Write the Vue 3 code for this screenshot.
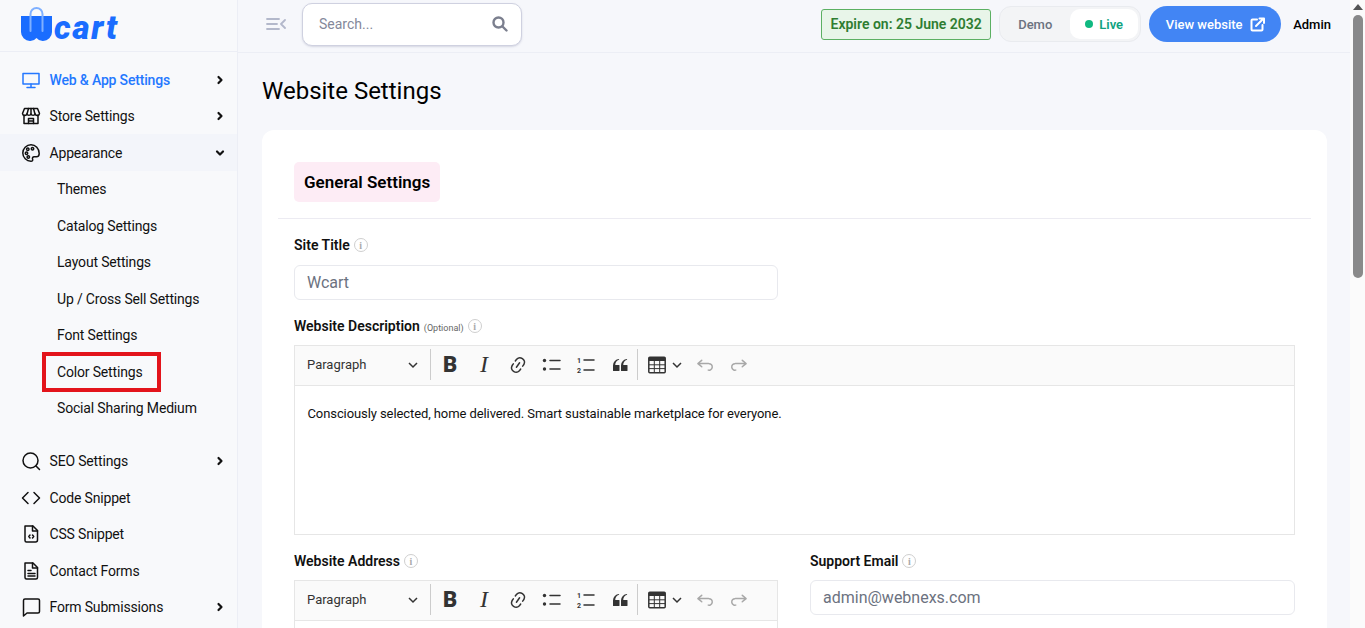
<template>
  <div class="page">
    <aside class="sidebar">
      <div class="logo">
        <svg width="32" height="35" viewBox="0 0 32 35">
          <path d="M0 9h31v16a9 9 0 0 1-9 9 8 8 0 0 1-6.500-3 8 8 0 0 1-6.500 3 9 9 0 0 1-9-9z" fill="#1a6dff" />
          <path d="M9.500 24V7a6 6 0 0 1 12 0v17" fill="none" stroke="#7fb0ff" stroke-width="2" stroke-linecap="round" />
        </svg>
        <span class="logo-text">cart</span>
      </div>
      <nav class="menu">
        <template v-for="item in menu" :key="item.label">
          <div class="menu-row" :class="{ active: item.active, open: item.open, spaced: item.spaced }">
            <svg class="menu-icon" width="20" height="20" viewBox="0 0 20 20" fill="none" stroke="currentColor" stroke-width="1.5" stroke-linecap="round" stroke-linejoin="round">
              <path v-for="d in item.paths" :key="d" :d="d" />
            </svg>
            <span class="menu-label">{{ item.label }}</span>
            <svg v-if="item.arrow" class="chevron" width="10" height="10" viewBox="0 0 10 10" fill="none" stroke="#111" stroke-width="2.2" stroke-linecap="round" stroke-linejoin="round">
              <path :d="item.open ? 'M2 3.500 5 6.500 8 3.500' : 'M3.500 2 6.500 5 3.500 8'" />
            </svg>
          </div>
          <template v-if="item.open">
            <div v-for="sub in subMenu" :key="sub" class="sub-row">
              <span>{{ sub }}</span>
              <i v-if="sub === 'Color Settings'" class="red-box"></i>
            </div>
          </template>
        </template>
      </nav>
    </aside>

    <div class="main">
      <header class="topbar">
        <svg class="toggle" width="20" height="14" viewBox="0 0 20 14" fill="none" stroke="#b3b8cb" stroke-width="1.8" stroke-linecap="round" stroke-linejoin="round">
          <path d="M1 2h12M1 7h10M1 12h12M19 3l-4 4 4 4" />
        </svg>
        <div class="search">
          <span>Search...</span>
          <svg width="16" height="16" viewBox="0 0 16 16" fill="none" stroke="#7b7f8e" stroke-width="2.4" stroke-linecap="round">
            <circle cx="6.500" cy="6.500" r="5" />
            <path d="m10.500 10.500 4 4" />
          </svg>
        </div>
        <div class="expire">Expire on: 25 June 2032</div>
        <div class="mode">
          <span class="demo">Demo</span>
          <span class="live"><i></i>Live</span>
        </div>
        <button class="view-btn">
          View website
          <svg width="15" height="15" viewBox="0 0 15 15" fill="none" stroke="#fff" stroke-width="2" stroke-linecap="round" stroke-linejoin="round">
            <path d="M7 2.500H2.500a1 1 0 0 0-1 1v9a1 1 0 0 0 1 1h9a1 1 0 0 0 1-1V8M6 9l7.500-7.500M9.500 1.500h4.500v4.500" />
          </svg>
        </button>
        <span class="admin">Admin</span>
      </header>

      <main class="content">
        <h1>Website Settings</h1>
        <section class="card">
          <div class="tag"><span>General Settings</span></div>
          <div class="divider"></div>

          <label class="field-label">Site Title <i class="info">i</i></label>
          <div class="input half">Wcart</div>

          <label class="field-label">Website Description <small>(Optional)</small> <i class="info">i</i></label>
          <div class="editor">
            <div class="toolbar">
              <span class="para">Paragraph</span>
              <svg class="para-arrow" width="10" height="10" viewBox="0 0 10 10" fill="none" stroke="#333" stroke-width="1.5"><path d="m1 3 4 4 4-4" /></svg>
              <i class="sep"></i>
              <span class="tool bold">B</span>
              <span class="tool ital">I</span>
              <span v-for="t in tools" :key="t.name" class="tool">
                <svg width="20" height="20" viewBox="0 0 20 20" v-html="t.svg"></svg>
              </span>
              <i class="sep"></i>
              <span class="tool table">
                <svg width="20" height="20" viewBox="0 0 20 20" v-html="tableSvg"></svg>
                <svg width="10" height="10" viewBox="0 0 10 10" fill="none" stroke="#333" stroke-width="1.5"><path d="m1 3 4 4 4-4" /></svg>
              </span>
              <span v-for="t in history" :key="t.name" class="tool">
                <svg width="20" height="20" viewBox="0 0 20 20" v-html="t.svg"></svg>
              </span>
            </div>
            <div class="editor-body">
              <p>Consciously selected, home delivered. Smart sustainable marketplace for everyone.</p>
            </div>
          </div>

          <div class="two-col">
            <div>
              <label class="field-label">Website Address <i class="info">i</i></label>
              <div class="editor">
                <div class="toolbar">
                  <span class="para">Paragraph</span>
                  <svg class="para-arrow" width="10" height="10" viewBox="0 0 10 10" fill="none" stroke="#333" stroke-width="1.5"><path d="m1 3 4 4 4-4" /></svg>
                  <i class="sep"></i>
                  <span class="tool bold">B</span>
                  <span class="tool ital">I</span>
                  <span v-for="t in tools" :key="t.name" class="tool">
                    <svg width="20" height="20" viewBox="0 0 20 20" v-html="t.svg"></svg>
                  </span>
                  <i class="sep"></i>
                  <span class="tool table">
                    <svg width="20" height="20" viewBox="0 0 20 20" v-html="tableSvg"></svg>
                    <svg width="10" height="10" viewBox="0 0 10 10" fill="none" stroke="#333" stroke-width="1.5"><path d="m1 3 4 4 4-4" /></svg>
                  </span>
                  <span v-for="t in history" :key="t.name" class="tool">
                    <svg width="20" height="20" viewBox="0 0 20 20" v-html="t.svg"></svg>
                  </span>
                </div>
                <div class="editor-body short"></div>
              </div>
            </div>
            <div>
              <label class="field-label">Support Email <i class="info">i</i></label>
              <div class="input email">admin@webnexs.com</div>
            </div>
          </div>
        </section>
      </main>
    </div>

    <div class="scrollbar">
      <i class="arrow"></i>
      <i class="thumb"></i>
    </div>
  </div>
</template>

<script setup>
const menu = [
  { label: 'Web & App Settings', active: true, arrow: true, paths: ['M2 3.500h16v10.500H2z', 'M10 14v3.500M6 17.500h8'] },
  { label: 'Store Settings', arrow: true, paths: ['M3 9v8.500h14V9', 'M3.500 2.500h13L18.500 7.500a2.200 2.200 0 0 1-4.300.5 2.300 2.300 0 0 1-4.200 0 2.300 2.300 0 0 1-4.200 0 2.200 2.200 0 0 1-4.300-.5z', 'M7.500 2.500 6 8M12.500 2.500 14 8M10 2.500V8', 'M7.500 17.500v-5h5v5M7.500 15h5'] },
  { label: 'Appearance', arrow: true, open: true, paths: ['M10 1.800a8.200 8.200 0 0 0 0 16.400c1.500 0 2-1 1.600-2-.5-1.300 0-2.400 1.500-2.400h2.400c1.800 0 2.700-1.200 2.700-3.300C18.200 5.500 14.500 1.800 10 1.800z', 'M5.500 9a1.200 1.200 0 1 0 .01 0z', 'M6.800 5a1.200 1.200 0 1 0 .01 0z', 'M11.500 4.500a1.200 1.200 0 1 0 .01 0z', 'M7.300 12.800a1.200 1.200 0 1 0 .01 0z'] },
  { label: 'SEO Settings', arrow: true, spaced: true, paths: ['M9.500 2a7.500 7.500 0 1 0 0 15 7.500 7.500 0 0 0 0-15z', 'm15 15 3.500 3.500'] },
  { label: 'Code Snippet', paths: ['M7 4.500 1.500 10 7 15.500', 'M13 4.500l5.500 5.500-5.500 5.500'] },
  { label: 'CSS Snippet', paths: ['M4 2h8l4.500 4.500V16a2 2 0 0 1-2 2H5.500A1.500 1.500 0 0 1 4 16.500z', 'M11.500 2v5h5', 'M9 11 7.800 12.500 9 14M11.500 11l1.200 1.500-1.200 1.500'] },
  { label: 'Contact Forms', paths: ['M4 2h8l4.500 4.500V16.500a1.500 1.500 0 0 1-1.500 1.500H5.500A1.500 1.500 0 0 1 4 16.500z', 'M11.500 2v5h5', 'M7 9.500h3M7 12.500h7M7 15h7'] },
  { label: 'Form Submissions', arrow: true, paths: ['M2.500 3.500A1.500 1.500 0 0 1 4 2h13a1.500 1.500 0 0 1 1.500 1.500v11a1.500 1.500 0 0 1-1.500 1.500H6l-3.500 3z'] },
]

const subMenu = ['Themes', 'Catalog Settings', 'Layout Settings', 'Up / Cross Sell Settings', 'Font Settings', 'Color Settings', 'Social Sharing Medium']

const stroke = 'fill="none" stroke="#333" stroke-width="1.500" stroke-linecap="round" stroke-linejoin="round"'

const tools = [
  { name: 'link', svg: `<path fill="#333" d="m11.077 15 .991-1.416a.75.75 0 1 1 1.229.86l-1.148 1.64a.748.748 0 0 1-.217.206 5.251 5.251 0 0 1-8.503-5.955.741.741 0 0 1 .12-.274l1.147-1.639a.75.75 0 1 1 1.228.86L4.933 10.700l.006.003a3.750 3.750 0 0 0 6.132 4.294l.006.004zm5.494-5.335a.748.748 0 0 1-.12.274l-1.147 1.639a.75.75 0 1 1-1.228-.86l.86-1.230a3.750 3.750 0 0 0-6.144-4.301l-.86 1.229a.75.75 0 0 1-1.229-.86l1.148-1.640a.748.748 0 0 1 .217-.206 5.251 5.251 0 0 1 8.503 5.955zm-4.563-2.532a.75.75 0 0 1 .184 1.045l-3.155 4.505a.75.75 0 1 1-1.229-.86l3.155-4.506a.75.75 0 0 1 1.045-.184z"/>` },
  { name: 'bullets', svg: `<circle cx="2.500" cy="5.500" r="1.700" fill="#333"/><circle cx="2.500" cy="14" r="1.700" fill="#333"/><path d="M8 5.500h10M8 14h10" ${stroke}/>` },
  { name: 'numbers', svg: `<text x="1" y="7.500" font-family="Roboto" font-weight="700" font-size="7" fill="#333">1</text><text x="1" y="18" font-family="Roboto" font-weight="700" font-size="7" fill="#333">2</text><path d="M8 5h10M8 15h10" ${stroke}/>` },
  { name: 'quote', svg: `<path fill="#333" d="M3 10.423a6.500 6.500 0 0 1 6.056-6.408l.038.670C6.448 5.423 5.354 7.663 5.220 10H9c.552 0 .5.432.5.986v4.511c0 .554-.448.503-1 .503h-5c-.552 0-.5-.449-.5-1.003v-4.574zm8 0a6.500 6.500 0 0 1 6.056-6.408l.038.670c-2.646.739-3.740 2.979-3.873 5.315H17c.552 0 .5.432.5.986v4.511c0 .554-.448.503-1 .503h-5c-.552 0-.5-.449-.5-1.003v-4.574z"/>` },
]

const tableSvg = `<rect x="1.800" y="2.300" width="16.400" height="15.400" rx="1" fill="none" stroke="#333" stroke-width="1.500"/><rect x="1.800" y="2.300" width="16.400" height="3.700" fill="#333"/><path d="M7.300 6v11M12.700 6v11M2 9.800h16M2 13.600h16" stroke="#333" stroke-width="1"/>`

const history = [
  { name: 'undo', svg: `<path fill="#a8a8a8" d="m5.042 9.367 2.189 1.837a.75.75 0 0 1-.965 1.149l-3.788-3.180a.747.747 0 0 1-.21-.284.75.75 0 0 1 .17-.945L6.230 4.762a.75.75 0 1 1 .964 1.150L4.863 7.866h8.917A.75.75 0 0 1 14 7.900a4 4 0 1 1-1.477 7.718l.344-1.489a2.500 2.500 0 1 0 1.094-4.730l.008-.032H5.042z"/>` },
  { name: 'redo', svg: `<path fill="#a8a8a8" d="m14.958 9.367-2.189 1.837a.75.75 0 0 0 .965 1.149l3.788-3.180a.747.747 0 0 0 .21-.284.75.75 0 0 0-.17-.945L13.770 4.762a.75.75 0 1 0-.964 1.150l2.331 1.955H6.220A.75.75 0 0 0 6 7.900a4 4 0 1 0 1.477 7.718l-.344-1.489A2.500 2.500 0 1 1 6.039 9.400l-.008-.032h8.927z"/>` },
]
</script>

<style>
html, body {
  margin: 0;
  height: 100%;
  overflow: hidden;
}
</style>

<style scoped>
.page {
  display: flex;
  width: 1365px;
  height: 628px;
  overflow: hidden;
  background: #f6f7fb;
  color: #111;
  font-family: Roboto, "Liberation Sans", sans-serif;
  font-size: 14px;
}

.sidebar {
  width: 238px;
  flex: none;
  box-sizing: border-box;
  background: #f8f9fb;
  border-right: 1px solid #eceef5;
}

.logo {
  display: flex;
  align-items: flex-start;
  height: 52px;
  padding: 7px 0 0 21px;
  box-sizing: border-box;
  border-bottom: 1px solid #eceef5;
}

.logo-text {
  margin: 3px 0 0 1px;
  color: #1a6dff;
  font-size: 33px;
  line-height: 36px;
  font-weight: 900;
  font-style: italic;
  letter-spacing: 1.800px;
}

.menu {
  padding-top: 9.250px;
}

.menu-row,
.sub-row {
  display: flex;
  align-items: center;
  height: 36.500px;
  letter-spacing: -0.17px;
}

.menu-row {
  padding: 0 12px 0 21px;
}

.menu-row.active {
  color: #2478ff;
  font-weight: 500;
}

.menu-row.open {
  background: #f3f5fa;
}

.menu-row.spaced {
  margin-top: 16.500px;
}

.menu-icon {
  flex: none;
  margin-right: 8.500px;
}

.menu-label {
  flex: 1;
}

.chevron {
  flex: none;
}

.sub-row {
  position: relative;
  padding-left: 57px;
}

.red-box {
  position: absolute;
  left: 42px;
  top: -1px;
  width: 119px;
  height: 40px;
  box-sizing: border-box;
  border: 4px solid #e3141b;
}

.main {
  flex: 1;
  min-width: 0;
}

.topbar {
  display: flex;
  align-items: center;
  height: 53px;
  box-sizing: border-box;
  padding: 0 19px 4px 28px;
  border-bottom: 1px solid #eceef5;
}

.toggle {
  flex: none;
}

.search {
  display: flex;
  align-items: center;
  justify-content: space-between;
  width: 220px;
  height: 43px;
  margin-left: 16px;
  padding: 0 13px 0 16px;
  box-sizing: border-box;
  border: 1px solid #cfd1e0;
  border-radius: 10px;
  background: #fff;
  box-shadow: 0 1px 2px rgba(120, 125, 160, 0.25);
  color: #84889a;
}

.expire {
  margin-left: auto;
  width: 170px;
  height: 31px;
  box-sizing: border-box;
  border: 1px solid #5cb063;
  border-radius: 3px;
  background: #e8f5e9;
  color: #2e7d32;
  font-weight: 600;
  line-height: 29px;
  text-align: center;
}

.mode {
  display: flex;
  align-items: center;
  width: 142px;
  height: 36px;
  margin-left: 8px;
  padding-right: 2px;
  box-sizing: border-box;
  border: 1px solid #e9ebef;
  border-radius: 12px;
  background: #f3f4f6;
  font-size: 13px;
  font-weight: 500;
}

.demo {
  flex: 1;
  padding-left: 18px;
  color: #6b7280;
}

.live {
  display: flex;
  align-items: center;
  justify-content: center;
  gap: 6px;
  width: 68px;
  height: 30px;
  border-radius: 10px;
  background: #fff;
  color: #10a37f;
  font-weight: 600;
}

.live i {
  width: 8px;
  height: 8px;
  border-radius: 50%;
  background: #10b981;
}

.view-btn {
  display: flex;
  align-items: center;
  justify-content: center;
  gap: 7px;
  width: 132px;
  height: 36px;
  margin-left: 8px;
  border: 0;
  border-radius: 18px;
  background: #4285f4;
  color: #fff;
  font: 500 13px Roboto, sans-serif;
}

.admin {
  margin-left: 12px;
  font-size: 13px;
  font-weight: 500;
  color: #000;
}

.content {
  padding: 0 23px 0 24px;
}

h1 {
  margin: 0;
  padding-top: 22px;
  height: 55px;
  color: #000;
  font-size: 24px;
  line-height: 32px;
  font-weight: 400;
}

.card {
  padding: 32px;
  border-radius: 12px;
  background: #fff;
}

.tag {
  display: flex;
}

.tag span {
  height: 40px;
  padding: 0 10px;
  border-radius: 5px;
  background: #fdecf5;
  font-size: 17px;
  font-weight: 600;
  line-height: 40px;
  color: #000;
}

.divider {
  height: 1px;
  margin: 16px -16px 0;
  background: #ecebf2;
}

.field-label {
  display: flex;
  align-items: center;
  gap: 4px;
  height: 20px;
  margin-top: 16px;
  font-weight: 600;
  color: #111;
}

.field-label small {
  font-size: 9px;
  font-weight: 400;
  color: #666;
  padding-top: 3px;
}

.info {
  display: inline-flex;
  align-items: center;
  justify-content: center;
  width: 14px;
  height: 14px;
  box-sizing: border-box;
  border: 1px solid #cfcfcf;
  border-radius: 50%;
  color: #aaa;
  font: 700 10px "Liberation Serif", serif;
}

.input {
  height: 35px;
  margin-top: 10px;
  padding-left: 12px;
  box-sizing: border-box;
  border: 1px solid #e8e9ee;
  border-radius: 6px;
  background: #fff;
  color: #6c7280;
  font-size: 16px;
  line-height: 33px;
}

.input.half {
  width: 484px;
}

.input.email {
  margin-top: 9px;
}

.editor {
  margin-top: 9px;
  border: 1px solid #e6e6e6;
}

.toolbar {
  display: flex;
  align-items: center;
  height: 37px;
  padding-bottom: 2px;
  border-bottom: 1px solid #e6e6e6;
  background: #fafafa;
  overflow: hidden;
  color: #333;
}

.para {
  width: 122px;
  padding-left: 12px;
  box-sizing: border-box;
  font-size: 13px;
  color: #333;
}

.para-arrow {
  flex: none;
  margin-left: -9px;
  margin-right: 12px;
}

.sep {
  flex: none;
  width: 1px;
  height: 31px;
  background: #ccc;
}

.tool {
  display: flex;
  flex: none;
  align-items: center;
  justify-content: center;
  width: 34px;
  height: 37px;
}

.tool:nth-of-type(2) {
  margin-left: 2px;
}

.bold {
  font-size: 22px;
  font-weight: 900;
  color: #333;
}

.ital {
  font: italic 400 24px "Liberation Serif", serif;
  color: #333;
}

.table {
  width: 50px;
  justify-content: flex-start;
  gap: 5px;
  padding-left: 9px;
  box-sizing: border-box;
}

.editor-body {
  height: 148px;
  padding: 0 12.500px;
  background: #fff;
}

.editor-body p {
  margin: 0;
  padding-top: 20px;
  font-size: 13px;
  line-height: 16px;
  letter-spacing: -0.09px;
  color: #111;
}

.editor-body.short {
  height: 80px;
}

.two-col {
  display: grid;
  grid-template-columns: 484px 485px;
  column-gap: 32px;
  margin-top: 16px;
}

.two-col .field-label {
  margin-top: 0;
}

.scrollbar {
  position: relative;
  flex: none;
  width: 15px;
  background: #fbfbfb;
}

.arrow {
  position: absolute;
  top: 4px;
  left: 3px;
  width: 0;
  height: 0;
  border: 5px solid transparent;
  border-top: 0;
  border-bottom: 6px solid #555;
}

.thumb {
  position: absolute;
  top: 15px;
  left: 3px;
  width: 10px;
  height: 263px;
  border-radius: 5px;
  background: #8a8a8a;
}
</style>
